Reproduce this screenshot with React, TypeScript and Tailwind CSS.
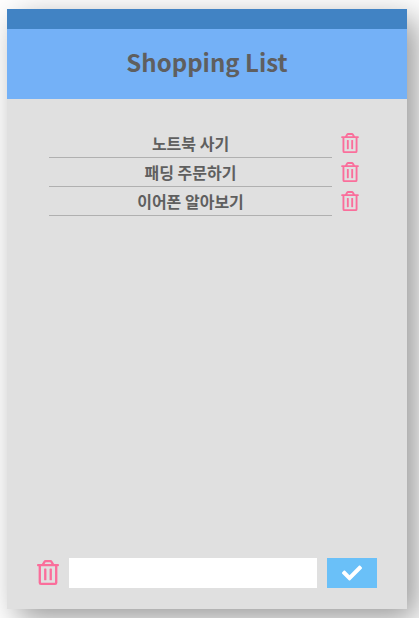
import { useState } from "react";
import type { FormEvent } from "react";
import { FaCheck, FaRegTrashAlt } from "react-icons/fa";

const initialItems = ["노트북 사기", "패딩 주문하기", "이어폰 알아보기"];

export default function App() {
  const [items, setItems] = useState<string[]>(initialItems);
  const [text, setText] = useState("");

  const addItem = (event: FormEvent) => {
    event.preventDefault();
    if (!text.trim()) return;
    setItems([...items, text.trim()]);
    setText("");
  };

  return (
    <div className="flex min-h-screen bg-white pt-[9px] pr-3 pb-[9px] pl-[7px] font-['Noto_Sans_CJK_KR',sans-serif] text-[#5f5f5f]">
      <main className="flex grow flex-col bg-[#e0e0e0] shadow-[10px_10px_30px_#999999]">
        <header className="flex h-[90px] items-center justify-center border-t-20 border-[#4183c4] bg-[#74b1f7] pb-1">
          <h1 className="text-2xl font-bold">Shopping List</h1>
        </header>
        <ul className="flex grow flex-col pt-[30px] pr-12 pl-[42px]">
          {items.map((item, index) => (
            <li key={index} className="flex items-start gap-[9px]">
              <span className="h-[29px] grow border-b border-[#b0b0b0] text-center text-base leading-7 font-bold">
                {item}
              </span>
              <button
                type="button"
                aria-label={`${item} 삭제`}
                className="pt-1 text-[#fa6e9b]"
                onClick={() => setItems(items.filter((_, i) => i !== index))}
              >
                <FaRegTrashAlt className="h-5 w-[18px]" />
              </button>
            </li>
          ))}
        </ul>
        <form onSubmit={addItem} className="flex items-start gap-2.5 px-[30px] pb-[21px]">
          <button type="button" aria-label="전체 삭제" className="pt-0.5 text-[#fa6e9b]" onClick={() => setItems([])}>
            <FaRegTrashAlt className="h-[25px] w-[22px]" />
          </button>
          <input
            aria-label="새 항목"
            value={text}
            onChange={(event) => setText(event.target.value)}
            className="h-[30px] min-w-0 grow bg-white px-2 text-base outline-none"
          />
          <button
            type="submit"
            aria-label="추가"
            className="flex h-[30px] w-[50px] items-center justify-center bg-[#6ac0f8] text-white"
          >
            <FaCheck className="size-5" />
          </button>
        </form>
      </main>
    </div>
  );
}
